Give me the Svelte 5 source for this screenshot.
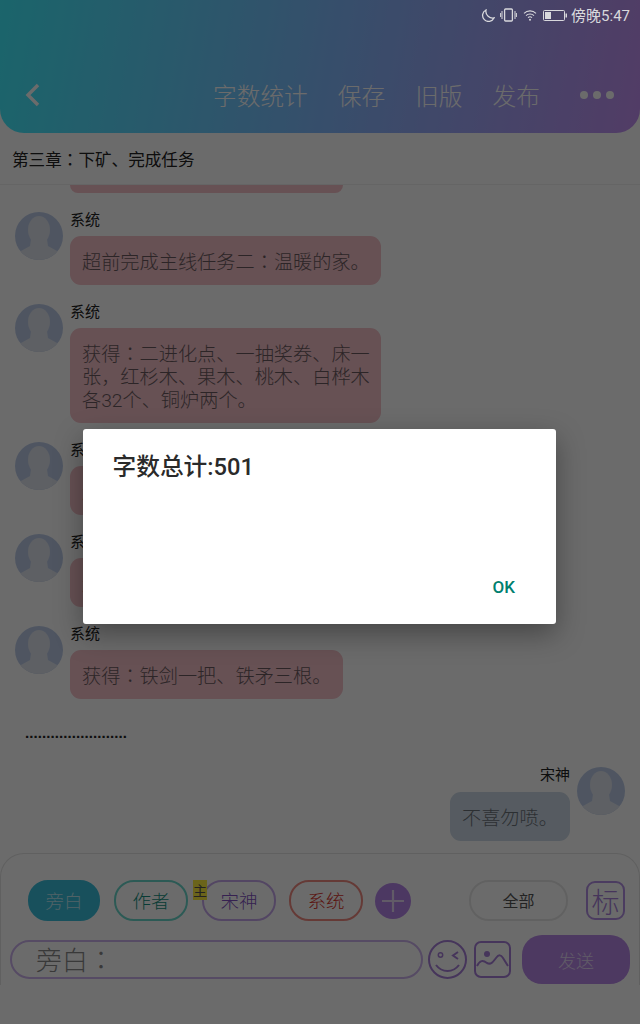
<script>
  const nav = ['字数统计', '保存', '旧版', '发布'];
  const left = [
    { text: ['超前完成主线任务二：温暖的家。'], w: 311 },
    { text: ['获得：二进化点、一抽奖券、床一', '张，红杉木、果木、桃木、白桦木', '各32个、铜炉两个。'], w: 311 },
    { text: ['超前完成主线任务三：铜炉。'], w: 273 },
    { text: ['超前完成支线任务：矿石。'], w: 273 },
    { text: ['获得：铁剑一把、铁矛三根。'], w: 273 }
  ];
  const tabs = [
    { t: '旁白', c: 'fill', w: 72 },
    { t: '作者', c: 'teal', w: 74 },
    { t: '宋神', c: 'purple', w: 74 },
    { t: '系统', c: 'red', w: 74 }
  ];
  // The full-width colon sits centred in its cell, as in the Japanese glyph set.
  const parts = (s) => s.split(/(：)/);
</script>

{#snippet line(s)}
  {#each parts(s) as p}{#if p === '：'}<span class="colon">：</span>{:else}{p}{/if}{/each}
{/snippet}

{#snippet avatar()}
  <svg class="avatar" viewBox="0 0 48 48" aria-hidden="true">
    <defs><clipPath id="clipc"><circle cx="24" cy="24" r="24" /></clipPath></defs>
    <circle cx="24" cy="24" r="24" fill="#bccbe8" />
    <g clip-path="url(#clipc)" fill="#dfe4ee">
      <ellipse cx="24" cy="18" rx="11" ry="14" />
      <path d="M16 27h16l1 7 11 6v8H4v-8l11-6z" />
    </g>
  </svg>
{/snippet}

<div class="page">
  <header class="head">
    <div class="status">
      <svg width="14" height="13" viewBox="0 0 14 13" class="st"><path d="M5 1a6 6 0 1 0 8 8c-4 1-9-3-8-8z" fill="none" stroke="currentColor" stroke-width="1.3" /></svg>
      <svg width="17" height="14" viewBox="0 0 17 14" class="st vib"><rect x="4.6" y="1" width="7.8" height="12" rx="1" fill="none" stroke="currentColor" stroke-width="1.3" /><path d="M2 3v8M.6 5v4M15 3v8M16.4 5v4" stroke="currentColor" stroke-width="1" /></svg>
      <svg width="14" height="12" viewBox="0 0 14 12" class="st wf"><path d="M1 4.4a8.500 8.500 0 0 1 12 0M3 6.600a5.700 5.700 0 0 1 8 0M5 8.700a2.900 2.900 0 0 1 4 0" fill="none" stroke="currentColor" stroke-width="1.100" /><circle cx="7" cy="10.800" r="1" fill="currentColor" /></svg>
      <svg width="24" height="11" viewBox="0 0 24 11" class="st bat"><rect x=".5" y=".5" width="21" height="10" rx="1" fill="none" stroke="currentColor" /><rect x="2" y="2" width="6" height="7" fill="currentColor" /><rect x="22.500" y="3.500" width="1.500" height="4" fill="currentColor" /></svg>
      <span class="time">傍晚5:47</span>
    </div>
    <nav class="nav">
      <svg class="back" width="16" height="24" viewBox="0 0 16 24"><path d="M13 2 3 12l10 10" fill="none" stroke="currentColor" stroke-width="3.400" /></svg>
      <div class="links">
        {#each nav as n}<span>{n}</span>{/each}
      </div>
      <div class="dots"><i></i><i></i><i></i></div>
    </nav>
  </header>

  <div class="chapter">{@render line('第三章：下矿、完成任务')}</div>

  <main class="chat">
    <div class="cut"></div>
    {#each left as m}
      <div class="msg">
        {@render avatar()}
        <div class="body">
          <div class="name">系统</div>
          <div class="bubble pink" style="width:{m.w}px">
            {#each m.text as l}<div>{@render line(l)}</div>{/each}
          </div>
        </div>
      </div>
    {/each}
    <div class="ellipsis">........................</div>
    <div class="msg right">
      <div class="body">
        <div class="name">宋神</div>
        <div class="bubble blue">不喜勿喷。</div>
      </div>
      {@render avatar()}
    </div>
  </main>

  <section class="panel">
    <div class="row one">
      {#each tabs as tab}
        <div class="pill {tab.c}" style="width:{tab.w}px">
          {tab.t}
          {#if tab.c === 'purple'}<b class="badge">主</b>{/if}
        </div>
      {/each}
      <svg class="plus" width="36" height="36" viewBox="0 0 36 36"><circle cx="18" cy="18" r="18" fill="#b685ea" /><path d="M18 7v22M7 18h22" stroke="#e6daf6" stroke-width="2.200" /></svg>
      <div class="pill all">全部</div>
      <div class="mark">标</div>
    </div>
    <div class="row two">
      <div class="input">旁白{@render line('：')}</div>
      <svg class="smile" width="39" height="39" viewBox="0 0 39 39"><g fill="none" stroke="#a77fd9" stroke-width="2"><circle cx="19.500" cy="19.500" r="18.500" /><circle cx="12.500" cy="15" r="2.200" stroke-width="1.500" /><path d="M30 12l-5 3.500 5 3.500M8 25c6 8 17 8 23 0" /></g></svg>
      <svg class="pic" width="37" height="37" viewBox="0 0 37 37"><g fill="none" stroke="#a77fd9" stroke-width="2"><rect x="1" y="1" width="35" height="35" rx="6" /><path d="M3 25c3-6 6-6 10-3 4 2 6-1 9-5 3-4 5-3 7 0l5 8" /></g><circle cx="13" cy="13" r="3" fill="#a77fd9" /></svg>
      <div class="send">发送</div>
    </div>
  </section>

  <div class="scrim">
    <div class="dialog" role="dialog">
      <h2>字数总计:501</h2>
      <button>OK</button>
    </div>
  </div>
</div>

<style>
  :global(body) { margin: 0; }
  .page {
    position: relative; width: 640px; height: 1024px; overflow: hidden; background: #fff; color: #222;
    font-family: Roboto, "Noto Sans CJK SC", sans-serif;
  }
  .colon { font-family: "Noto Sans CJK JP", sans-serif; line-height: 0; }
  .head {
    height: 133px; box-sizing: border-box; border-radius: 0 0 24px 24px;
    background: linear-gradient(100deg, #40f0ff 0%, #80bcff 50%, #c38ff2 100%);
    color: #fff;
  }
  .status {
    position: relative; z-index: 3; height: 30px; display: flex; align-items: center; justify-content: flex-end;
    padding-right: 10px; color: #d8d8dc;
  }
  .st { flex: none; margin-right: 5px; }
  .vib { margin-right: 6px; }
  .wf { margin-right: 6px; }
  .time { font-size: 15px; margin: -1px 0 0 -1px; }
  .nav { height: 70px; margin-top: 30px; display: flex; align-items: center; padding: 0 26px 0 25px; }
  .back { color: #fff; }
  .links { display: flex; gap: 30px; margin-left: 172px; font-size: 23.700px; font-weight: 300; white-space: nowrap; }
  .dots { display: flex; gap: 5px; margin-left: auto; }
  .dots i { width: 8px; height: 8px; border-radius: 50%; background: #fff; }
  .chapter { height: 52px; box-sizing: border-box; border-bottom: 1px solid #f0f0f0; padding-left: 12px; font-size: 16.600px; line-height: 55px; white-space: nowrap; }
  .chat { height: 668px; overflow: hidden; display: flex; flex-direction: column; gap: 19px; }
  .cut { height: 8px; width: 273px; margin-left: 70px; flex: none; background: #f5c0c8; border-radius: 0 0 10px 10px; }
  .msg { display: flex; gap: 7px; padding-left: 15px; flex: none; }
  .msg.right { justify-content: flex-end; padding: 0 15px 0 0; }
  .avatar { width: 48px; height: 48px; flex: none; }
  .name { font-size: 15px; line-height: 17px; margin-bottom: 7px; }
  .right .name { text-align: right; margin-bottom: 8px; }
  .bubble { box-sizing: border-box; border-radius: 11px; padding: 15px 12px 11px; font-size: 19.200px; line-height: 23px; font-weight: 300; white-space: nowrap; color: #6a5a5e; }
  .pink { background: #f5c0c8; }
  .blue { background: #ccd9e6; width: 120px; color: #6a7078; }
  .ellipsis { height: 30px; padding-left: 25px; font: 700 15px/30px "Liberation Sans", sans-serif; letter-spacing: .08px; flex: none; }
  .panel { height: 132px; box-sizing: border-box; border: 1px solid #e4e4e4; border-bottom: 0; border-radius: 24px 24px 0 0; padding-top: 26px; }
  .row { display: flex; align-items: center; }
  .one { padding: 0 14px 0 27px; height: 41px; }
  .two { padding-left: 9px; margin-top: 14px; height: 49px; }
  .pill { position: relative; box-sizing: border-box; height: 41px; border-radius: 20px; display: flex; align-items: center; justify-content: center; font-size: 18.500px; font-weight: 300; margin-right: 14px; border: 2px solid #999; padding-bottom: 2px; }
  .fill { background: #39bfdc; border-color: #39bfdc; color: #bfeaf4; }
  .teal { border-color: #6ad6ca; color: #149080; }
  .purple { border-color: #c6a8ec; color: #8050c0; margin-right: 13px; }
  .red { border-color: #f08a82; color: #d83028; margin-right: 12px; }
  .badge { position: absolute; left: -11px; top: -2px; width: 14px; height: 20px; background: #ffef40; color: #555; font: 400 14px/20px "Noto Sans CJK SC", sans-serif; text-align: center; }
  .plus { flex: none; }
  .all { width: 99px; margin: 0 18px 0 58px; border-color: #e8e8e8; color: #555; font-size: 16px; font-weight: 400; }
  .mark { width: 39px; height: 39px; box-sizing: border-box; border: 2px solid #b490e4; border-radius: 9px; display: flex; align-items: center; justify-content: center; font-size: 28px; font-weight: 300; color: #a77fd9; }
  .input { width: 413px; height: 39px; box-sizing: border-box; border: 2px solid #cdb2ee; border-radius: 20px; font-size: 26px; font-weight: 300; line-height: 39px; padding-left: 24px; color: #888; }
  .smile { margin-left: 5px; flex: none; }
  .pic { margin-left: 7px; flex: none; }
  .send { width: 108px; height: 49px; margin-left: 11px; border-radius: 20px; background: #b888e8; color: #e6daf6; font-size: 18px; font-weight: 300; display: flex; align-items: center; justify-content: center; }
  .scrim { position: absolute; inset: 0; z-index: 2; background: rgba(0, 0, 0, .58); display: flex; justify-content: center; align-items: flex-start; padding: 429px 1px 0 0; box-sizing: border-box; }
  .dialog { width: 473px; height: 195px; box-sizing: border-box; position: relative; background: #fff; border-radius: 3px; padding: 24px 0 1px 29.500px; box-shadow: 0 10px 28px rgba(0, 0, 0, .35); display: flex; flex-direction: column; }
  h2 { margin: 0; font-size: 23.700px; line-height: 28px; font-weight: 500; color: #2a2a2a; }
  button { margin: auto 41px 24px auto; padding: 0; border: 0; background: none; color: #00806f; font: 500 17px/24px Roboto, sans-serif; }
</style>
